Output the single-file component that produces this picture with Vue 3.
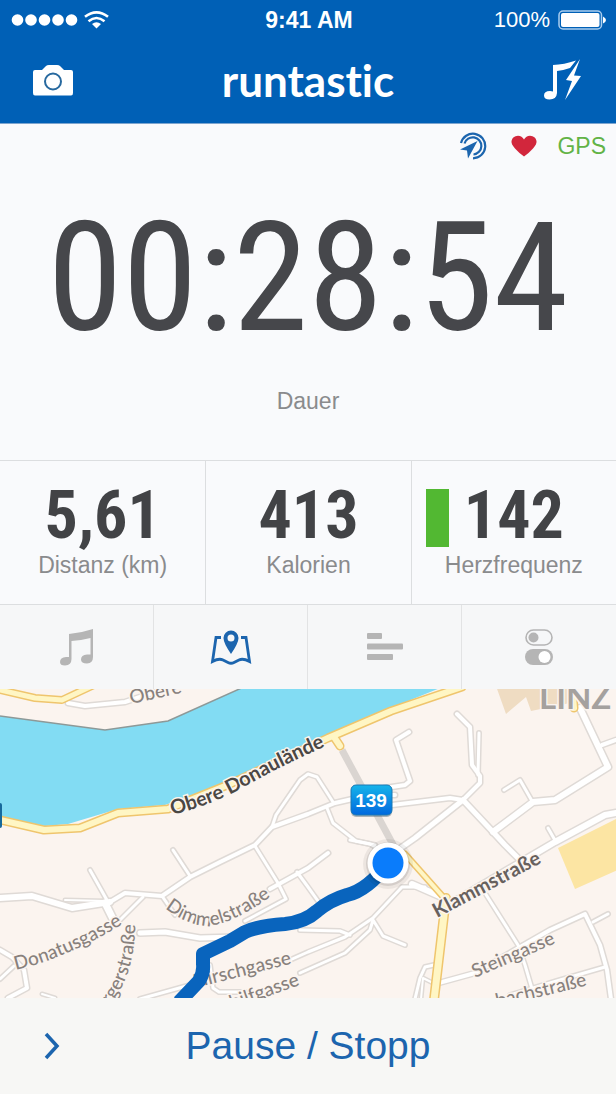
<script setup>
const stats = [
  { value: '5,61', label: 'Distanz (km)' },
  { value: '413', label: 'Kalorien' },
  { value: '142', label: 'Herzfrequenz', zone: true },
]

// Minor streets as [width, polyline points]
const streets = [
  [4, '68,703 85,706 125,702 158,691'],
  [4, '409,732 396,740 410,781 405,785 385,788'],
  [4, '457,714 470,727 472,765 480,776 480,783 463,800'],
  [3, '479,733 478,775'],
  [4, '463,800 450,798 392,805'],
  [4, '395,795 370,795 335,803 308,814 272,827 255,845 220,862 190,877 162,896 125,893 110,902'],
  [3, '272,827 276,815 300,780 308,774 317,777 333,802'],
  [3, '327,808 333,823 356,841 375,845'],
  [5, '463,800 415,838 395,852'],
  [5, '463,800 493,832 505,845 518,858'],
  [6, '493,832 533,802 555,800 608,767 580,708'],
  [3, '532,801 520,780 504,790'],
  [4, '602,745 616,740'],
  [6, '616,813 605,815 555,842 445,907'],
  [3, '548,828 556,842'],
  [6, '0,898 32,896 72,908 110,902'],
  [2, '65,900 105,901'],
  [3, '90,870 108,902'],
  [3, '173,850 190,876'],
  [7, '105,903 115,923'],
  [3, '143,897 118,922'],
  [3, '162,896 175,915'],
  [3, '255,846 278,883 286,899 245,921'],
  [4, '270,889 308,868 328,853'],
  [3, '297,872 308,887 318,901'],
  [5, '140,933 165,932 200,938 235,937'],
  [4, '0,950 12,957 24,970 27,988 8,998'],
  [3, '14,966 0,979'],
  [3, '210,965 213,988 219,992 245,992'],
  [3, '140,999 190,985'],
  [3, '290,960 308,952 345,937 373,918 402,887 425,887'],
  [2, '42,994 55,998'],
  [3, '350,840 370,844 385,852'],
  [3, '300,930 340,931 350,935'],
  [3, '300,973 345,953 370,930 373,920 383,936 405,945'],
  [6, '412,884 444,898'],
  [3, '485,893 518,945 525,965 535,999'],
  [4, '435,984 475,973 550,930 585,914 600,945 607,970 611,999'],
  [3, '593,922 608,914'],
  [3, '605,967 560,980 510,995'],
  [3, '434,965 425,967 420,978 415,999'],
  [2, '435,984 423,978 421,999'],
]

const mainRoads = [
  [6, '0,690 35,698 62,700 92,686'],
  [7, '0,820 44,830 80,828 118,813 168,809 230,784 328,738 391,711 462,687'],
  [7, '334,737 340,746'],
  [7, '572,686 574,708'],
  [5, '405,854 445,899'],
  [8, '446,898 434,1000'],
]

const routePoints =
  'M179 1002 L199 981 Q204 973 203 964 V954 L230 941 L245 932 Q258 926 285 924 Q305 922 317 911 Q330 900 347 895 Q368 890 388 863'
</script>

<template>
  <main class="app">
    <header class="header">
      <div class="status">
        <div class="signal">
          <svg width="96" height="18" viewBox="0 0 96 18" aria-label="Signal" fill="#fff">
            <circle v-for="i in 5" :key="i" :cx="i * 13.5 - 8" cy="9" r="5.8" />
            <g fill="none" stroke="#fff" stroke-width="2.6">
              <path d="M73 5.8 Q84.500 -3.2 96 5.8" />
              <path d="M76.500 10.2 Q84.500 3.8 92.500 10.2" />
            </g>
            <path d="M80 13 Q84.500 9.500 89 13 L84.500 17.500 Z" />
          </svg>
        </div>
        <time class="clock">9:41 AM</time>
        <div class="power">
          <span>100%</span>
          <svg width="48" height="20" viewBox="0 0 48 20" aria-label="Akku">
            <rect x="1" y="1" width="42.500" height="18" rx="4" fill="none" stroke="#a9cdee" stroke-width="1.500" />
            <rect x="3" y="3" width="38.500" height="14" rx="2" fill="#fff" />
            <path d="M45 6.500 Q48 8 48 10 Q48 12 45 13.500 Z" fill="#fff" />
          </svg>
        </div>
      </div>
      <div class="nav">
        <button type="button" aria-label="Kamera">
          <svg width="42" height="32" viewBox="0 0 42 32">
            <path d="M3 6 H10 L14 2 Q15 1 17 1 H25 Q27 1 28 2 L32 6 H39 Q41 6 41 8 V29 Q41 31.500 39 31.500 H3 Q1 31.500 1 29 V8 Q1 6 3 6 Z" fill="#fff" />
            <circle cx="21" cy="17.500" r="8" fill="#fff" stroke="#27699f" stroke-width="2" />
          </svg>
        </button>
        <h1>runtastic</h1>
        <button type="button" aria-label="Powersong">
          <svg width="40" height="42" viewBox="0 0 40 42" fill="#fff">
            <path d="M11 6 Q22 5.500 34 1.500 L28 9 Q21 11.500 15 12 V34 Q14.500 40.500 7.500 40.500 Q2 40.500 2 36.500 Q2 32 8 32 L11 32.500 Z" />
            <path d="M38 0 L24 21 L30 22 L23 41 L39 17 L32 16.500 Z" />
          </svg>
        </button>
      </div>
    </header>

    <section class="duration">
      <div class="sensors">
        <svg width="28" height="28" viewBox="0 0 28 28" aria-label="Live-Tracking" fill="none" stroke="#1c65ae" stroke-width="2.200">
          <path d="M2 11 A12.300 12.300 0 1 1 14 26.300" />
          <path d="M5.500 11.500 A8.600 8.600 0 1 1 14.500 22.500" />
          <path d="M18.500 9 L1 17.500 L8 18.500 L9 26.500 Z" fill="#1c65ae" stroke="none" />
        </svg>
        <svg width="26" height="22" viewBox="0 0 26 22" aria-label="Herz">
          <path d="M13 21.500 Q9 19 4 13.500 Q0 9 0.500 6 Q1.500 1 7 0.700 Q11 1 13 4.500 Q15 1 19 0.700 Q24.500 1 25.500 6 Q26 9 22 13.500 Q17 19 13 21.500 Z" fill="#d2263c" />
        </svg>
        <span class="gps">GPS</span>
      </div>
      <div class="time">00:28:54</div>
      <p class="caption">Dauer</p>
    </section>

    <section class="stats">
      <div v-for="s in stats" :key="s.label" class="stat" :class="{ zoned: s.zone }">
        <span v-if="s.zone" class="zone"></span>
        <div class="figures">
          <strong>{{ s.value }}</strong>
          <span class="caption">{{ s.label }}</span>
        </div>
      </div>
    </section>

    <nav class="tabs">
      <button type="button" aria-label="Musik">
        <svg width="36" height="38" viewBox="0 0 36 38" fill="#b5b5b5">
          <path d="M10 6 Q22 5 34 1 V29 Q34 35 28 35.500 Q22 35.500 22 31.500 Q22 27 28 26.500 L31.500 26.500 V10 Q22 12.500 12.500 13 V31 Q12.500 37 6 37.500 Q1 37.500 1 34 Q1 29.500 7 29 L10 29 Z" />
        </svg>
      </button>
      <button type="button" aria-label="Karte" aria-pressed="true">
        <svg width="42" height="36" viewBox="0 0 42 36" fill="none" stroke="#1c65ae" stroke-width="2.800">
          <path d="M11 8.500 H6 L2.500 32.500 Q9 29 13 31 L18 33.500 Q21 35 24 33.500 L29 31 Q33 29 39.500 32.500 L36 8.500 H31" />
          <path d="M21 25 Q13.500 14 13.500 9 A7.500 7.500 0 0 1 28.500 9 Q28.500 14 21 25 Z M21 5.500 A3.500 3.500 0 1 0 21 12.500 A3.500 3.500 0 1 0 21 5.500 Z" fill="#1c65ae" fill-rule="evenodd" stroke="none" />
        </svg>
      </button>
      <button type="button" aria-label="Statistik">
        <svg width="36" height="28" viewBox="0 0 36 28" fill="#b5b5b5">
          <rect width="15" height="6" rx="1" />
          <rect y="10.500" width="36" height="6" rx="1" />
          <rect y="21" width="26" height="6" rx="1" />
        </svg>
      </button>
      <button type="button" aria-label="Einstellungen">
        <svg width="28" height="36" viewBox="0 0 28 36">
          <rect x="1" y="1" width="26" height="15" rx="7.500" fill="none" stroke="#b5b5b5" stroke-width="1.600" />
          <circle cx="8.500" cy="8.500" r="5" fill="#b5b5b5" />
          <rect y="20" width="28" height="16" rx="8" fill="#b5b5b5" />
          <circle cx="19.500" cy="28" r="6" fill="#fff" />
        </svg>
      </button>
    </nav>

    <svg class="map" viewBox="0 689 616 309" role="img" aria-label="Karte mit Laufstrecke">
      <defs>
        <linearGradient id="shield" x1="0" y1="0" x2="0" y2="1">
          <stop offset="0" stop-color="#16b4ea" />
          <stop offset="1" stop-color="#0068de" />
        </linearGradient>
        <path id="l-obere" d="M131 704 L190 691" />
        <path id="l-donau" d="M172 815 Q212 805 244 787 Q284 764 340 740" />
        <path id="l-dimmel" d="M165 908 Q185 924 206 926 Q235 925 285 886" />
        <path id="l-donatus" d="M16 970 Q75 956 140 913" />
        <path id="l-buerger" d="M110 1005 Q143 965 133 890" />
        <path id="l-hirsch" d="M195 988 L310 959" />
        <path id="l-hilf" d="M232 1009 L334 973" />
        <path id="l-klamm" d="M437 918 L560 853" />
        <path id="l-stein" d="M475 978 L570 937" />
        <path id="l-bach" d="M482 1011 L622 977" />
      </defs>

      <rect y="688" width="616" height="310" fill="#fbf4ef" />
      <path d="M0 716 L105 730 L168 721 L246 686 H445 L391 708 L325 738 L230 782 L165 805 L118 809 L68 824 L45 826 L0 817 Z" fill="#82dcf3" />
      <path d="M0 716 L105 730 L168 721 L246 686" fill="none" stroke="#8d9998" stroke-width="1.500" />
      <path d="M496 686 L506 714 L526 697 L531 711 L570 703 V686 Z" fill="#efdcc2" />
      <path d="M620 817 L558 848 L575 889 L620 869 Z" fill="#fce5a3" />

      <g fill="none" stroke-linejoin="round" stroke-linecap="round">
        <polyline v-for="(r, i) in streets" :key="'c' + i" :points="r[1]" :stroke-width="r[0] + 3" stroke="#dfdad6" />
        <polyline v-for="(r, i) in streets" :key="'f' + i" :points="r[1]" :stroke-width="r[0]" stroke="#fff" />
        <polyline v-for="(r, i) in mainRoads" :key="'mc' + i" :points="r[1]" :stroke-width="r[0] + 2" stroke="#efc56d" />
        <polyline v-for="(r, i) in mainRoads" :key="'mf' + i" :points="r[1]" :stroke-width="r[0] - 1" stroke="#fff6c4" />
        <path d="M342 750 L397 852" stroke="#dad5d1" stroke-width="7" stroke-linecap="butt" />
      </g>

      <g class="labels">
        <text><textPath href="#l-obere">Obere</textPath></text>
        <text class="major"><textPath href="#l-donau">Obere Donaulände</textPath></text>
        <text><textPath href="#l-dimmel">Dimmelstraße</textPath></text>
        <text><textPath href="#l-donatus">Donatusgasse</textPath></text>
        <text><textPath href="#l-buerger">rgerstraße</textPath></text>
        <text><textPath href="#l-hirsch">Hirschgasse</textPath></text>
        <text><textPath href="#l-hilf">hilfgasse</textPath></text>
        <text class="mid"><textPath href="#l-klamm">Klammstraße</textPath></text>
        <text><textPath href="#l-stein">Steingasse</textPath></text>
        <text><textPath href="#l-bach">mbachstraße</textPath></text>
        <text class="city" x="539" y="709">LINZ</text>
      </g>

      <path :d="routePoints" fill="none" stroke="#0964bd" stroke-width="14" stroke-linejoin="round" />
      <rect x="-6" y="803" width="8" height="25" rx="2" fill="#17699b" />
      <circle cx="388" cy="864" r="25" fill="#000" opacity="0.060" />
      <circle cx="388" cy="864" r="22" fill="#000" opacity="0.100" />
      <circle cx="388" cy="863" r="20.500" fill="#fff" />
      <circle cx="388" cy="863" r="15.500" fill="#0a7cfb" />
      <rect x="351" y="787" width="41" height="30" rx="5" fill="#5f7180" opacity="0.500" />
      <rect x="351" y="785" width="41" height="30" rx="5" fill="url(#shield)" stroke="#1a78b4" />
      <text class="shield" x="371" y="807" text-anchor="middle">139</text>
    </svg>

    <footer class="footer">
      <button type="button" class="next" aria-label="Weiter">
        <svg width="18" height="28" viewBox="0 0 18 28" fill="none" stroke="#1c65ae" stroke-width="3.500">
          <path d="M3 2 L14 14 L3 26" />
        </svg>
      </button>
      <button type="button" class="pause">Pause / Stopp</button>
    </footer>
  </main>
</template>

<style>
body {
  margin: 0;
  background: #f7f7f5;
}
</style>

<style scoped>
.app {
  display: flex;
  flex-direction: column;
  min-height: 100vh;
  font-family: "Liberation Sans", Arial, sans-serif;
  background: #f9fafc;
}
button {
  display: flex;
  align-items: center;
  justify-content: center;
  margin: 0;
  padding: 0;
  border: 0;
  background: none;
  font: inherit;
  cursor: pointer;
}
svg {
  display: block;
}
.header {
  background: #0060b6;
  color: #fff;
  border-bottom: 1px solid #7da5cf;
}
.status {
  display: grid;
  grid-template-columns: 1fr auto 1fr;
  align-items: center;
  height: 40px;
  padding: 0 10px 0 12px;
  font-size: 22px;
}
.signal svg {
  overflow: visible;
}
.clock {
  font-size: 23px;
  font-weight: bold;
}
.power {
  display: flex;
  align-items: center;
  justify-content: flex-end;
  gap: 8px;
}
.nav {
  display: flex;
  align-items: center;
  justify-content: space-between;
  height: 79px;
  padding: 0 34px 4px 32px;
}
.nav h1 {
  margin: 0;
  font-family: Lato, sans-serif;
  font-size: 44px;
  line-height: 48px;
  font-weight: 700;
  font-variant-ligatures: none;
}
.duration {
  display: flex;
  flex-direction: column;
  align-items: center;
  border-bottom: 1px solid #dcdee0;
}
.sensors {
  display: flex;
  align-self: flex-end;
  align-items: center;
  gap: 24px;
  height: 44px;
  padding-right: 10px;
}
.gps {
  margin-left: -4px;
  color: #62b346;
  font-size: 23px;
}
.time {
  font-family: "Roboto Condensed", "Liberation Sans Narrow", "Liberation Sans", sans-serif;
  font-size: 152px;
  line-height: 184px;
  margin-top: 18px;
  color: #46474b;
}
.caption {
  margin: 0;
  font-size: 23px;
  line-height: 28px;
  color: #8a8b8d;
}
.duration .caption {
  margin: 17px 0 45px;
}
.stats {
  display: grid;
  grid-template-columns: repeat(3, 1fr);
  height: 143px;
  border-bottom: 1px solid #dcdee0;
}
.stat {
  display: flex;
  justify-content: center;
  padding-top: 20px;
}
.stat + .stat {
  border-left: 1px solid #dcdee0;
}
.zoned {
  position: relative;
}
.zone {
  position: absolute;
  left: 14px;
  top: 28px;
  width: 23px;
  height: 58px;
  background: #52b832;
}
.figures {
  display: flex;
  flex-direction: column;
  align-items: center;
}
.figures strong {
  font-family: "Roboto Condensed", "Liberation Sans Narrow", "Liberation Sans", sans-serif;
  font-size: 66px;
  line-height: 70px;
  color: #424346;
}
.tabs {
  display: grid;
  grid-template-columns: repeat(4, 1fr);
  height: 84px;
  background: #f6f7f8;
}
.tabs button:not(:last-child) {
  border-right: 1px solid #e2e3e4;
}
.map {
  width: 100%;
  height: auto;
}
.labels text {
  font-family: Lato, sans-serif;
  font-size: 19px;
  font-weight: 500;
  fill: #88817d;
  stroke: #fbf4ef;
  stroke-width: 3px;
  paint-order: stroke;
}
.labels .major {
  font-size: 20px;
  font-weight: 700;
  fill: #4b4744;
}
.labels .mid {
  font-size: 20px;
  font-weight: 700;
  fill: #67615e;
}
.labels .city {
  font-size: 33px;
  font-weight: 700;
  fill: #a5a19e;
}
.shield {
  font-family: "Liberation Sans", Arial, sans-serif;
  font-size: 19px;
  font-weight: bold;
  fill: #fff;
}
.footer {
  display: grid;
  grid-template-columns: 104px 1fr 104px;
  flex: 1;
  min-height: 96px;
  background: #f7f7f5;
}
.pause {
  color: #1c65ae;
  font-size: 39px;
}
</style>
